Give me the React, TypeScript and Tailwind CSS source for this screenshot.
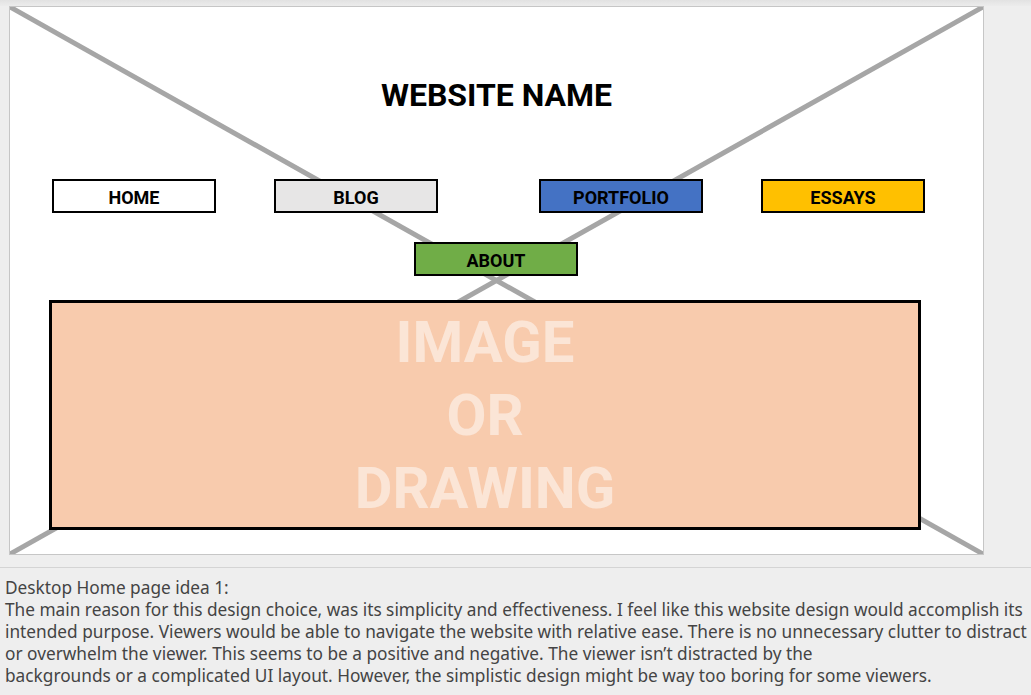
const navBtn =
  'w-[164px] h-[34px] border-2 border-black flex items-center justify-center pt-[3px] text-[18px] font-bold text-black leading-none';

export default function App() {
  return (
    <div className="min-h-screen bg-[#eeeeee] font-['Roboto',sans-serif]">
      <div className="h-[6px] bg-gradient-to-b from-[#e2e2e2] to-[#ececec]" />

      {/* Slide */}
      <div className="relative ml-[9px] w-[975px] h-[549px] bg-white border border-[#c6c6c6] overflow-hidden">
        <svg className="absolute inset-0" width="973" height="547" viewBox="0 0 973 547">
          <line x1="0" y1="0" x2="973" y2="547" stroke="#a6a6a6" strokeWidth="5" />
          <line x1="973" y1="0" x2="0" y2="547" stroke="#a6a6a6" strokeWidth="5" />
        </svg>

        <div className="relative flex flex-col">
          <h1 className="mt-[68px] h-[40px] flex items-center justify-center text-[32px] font-bold text-black">
            WEBSITE NAME
          </h1>

          <div className="mt-[64px] flex">
            <div className={`${navBtn} ml-[42px] bg-white`}>HOME</div>
            <div className={`${navBtn} ml-[58px] bg-[#e7e6e6]`}>BLOG</div>
            <div className={`${navBtn} ml-[101px] bg-[#4472c4]`}>PORTFOLIO</div>
            <div className={`${navBtn} ml-[58px] bg-[#ffc000]`}>ESSAYS</div>
          </div>

          <div className="mt-[29px] flex">
            <div className={`${navBtn} ml-[404px] bg-[#70ad47]`}>ABOUT</div>
          </div>

          <div className="mt-[24px] ml-[39px] w-[872px] h-[230px] border-[3px] border-black bg-[#f8cbad] pt-[3px] flex flex-col items-center text-[58px] leading-[73px] font-bold text-[#fbe5d6]">
            <span>IMAGE</span>
            <span>OR</span>
            <span>DRAWING</span>
          </div>
        </div>
      </div>

      {/* Notes */}
      <div className="mt-[12px] border-t border-[#d4d4d4] pl-[5px] pt-[9px] font-['Noto_Sans',sans-serif] text-[17.25px] leading-[22px] text-[#444444] whitespace-nowrap">
        <p>Desktop Home page idea 1:</p>
        <p>The main reason for this design choice, was its simplicity and effectiveness. I feel like this website design would accomplish its</p>
        <p>intended purpose. Viewers would be able to navigate the website with relative ease. There is no unnecessary clutter to distract</p>
        <p>or overwhelm the viewer. This seems to be a positive and negative. The viewer isn’t distracted by the</p>
        <p>backgrounds or a complicated UI layout. However, the simplistic design might be way too boring for some viewers.</p>
      </div>
    </div>
  );
}
